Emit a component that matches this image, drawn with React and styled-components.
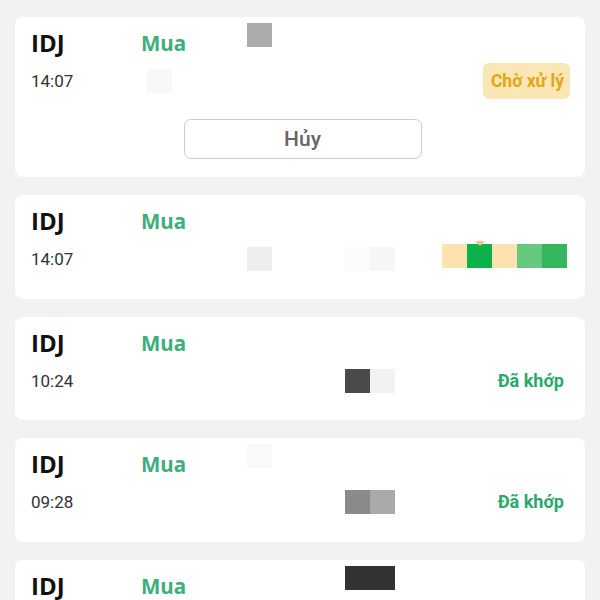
import React from "react";
import styled, { createGlobalStyle } from "styled-components";

const GlobalStyle = createGlobalStyle`
  html, body {
    margin: 0;
    padding: 0;
    background: #f2f2f2;
  }
  body {
    font-family: "Open Sans", "Noto Sans", sans-serif;
  }
`;

const OrderList = styled.div`
  display: flex;
  flex-direction: column;
  gap: 18px;
  padding: 17px 15px 20px;
`;

const Card = styled.div`
  background: #fff;
  border-radius: 8px;
  padding: 10px 21px 27.5px 16px;
`;

const OrderGrid = styled.div`
  display: grid;
  grid-template-columns: 110px 1fr auto;
  grid-template-rows: 32px 24px;
  row-gap: 10px;
  align-items: center;
`;

const Symbol = styled.div`
  font-size: 24px;
  font-weight: 700;
  line-height: 32px;
  color: #111;
`;

const SideCell = styled.div`
  display: flex;
  align-items: center;
  align-self: stretch;
`;

const Side = styled.span`
  font-size: 20.5px;
  font-weight: 700;
  line-height: 32px;
  color: #3daf7a;
  width: 106px;
  flex: none;
`;

const Time = styled.div`
  font-family: Roboto, "Liberation Sans", sans-serif;
  font-size: 17px;
  line-height: 24px;
  color: #333;
`;

const MaskStrip = styled.div`
  display: flex;
  align-self: ${(p) => (p.$top ? "start" : "center")};
  margin-top: ${(p) => (p.$top ? "-4px" : "0")};
`;

const MaskGroup = styled.span`
  display: flex;
`;

const MaskCell = styled.span`
  width: 25px;
  height: 24px;
  background: ${(p) => p.$color};
  flex: none;
`;

const StatusText = styled.div`
  font-family: Roboto, "Liberation Sans", sans-serif;
  font-size: 18px;
  font-weight: 700;
  line-height: 24px;
  color: #2aa96b;
  justify-self: end;
`;

const StatusPill = styled.div`
  font-family: Roboto, "Liberation Sans", sans-serif;
  font-size: 17.5px;
  font-weight: 700;
  color: #e2a614;
  background: #fbe6b6;
  border-radius: 6px;
  padding: 8px 6px 8px 8px;
  margin-right: -6px;
  justify-self: end;
  white-space: nowrap;
`;

const StatusBar = styled.div`
  display: flex;
  justify-self: end;
  margin-top: -6px;
  margin-right: -3px;
  position: relative;
`;

const BarCell = styled.span`
  width: 25px;
  height: 24px;
  background: ${(p) => p.$color};
`;

const Marker = styled.span`
  position: absolute;
  left: 33px;
  top: -3px;
  width: 0;
  height: 0;
  border-left: 5px solid transparent;
  border-right: 5px solid transparent;
  border-top: 5px solid #f6c27a;
`;

const Actions = styled.div`
  display: flex;
  justify-content: center;
  margin: 26px 0 -9.5px 10px;
`;

const CancelButton = styled.button`
  width: 238px;
  height: 40px;
  border: 1.5px solid #cdcdcd;
  border-radius: 7px;
  background: #fff;
  font-family: Roboto, "Liberation Sans", sans-serif;
  font-size: 21px;
  font-weight: 500;
  color: #666;
`;

function Masks({ groups, start, top }) {
  if (!groups || !groups.length) return null;
  let pos = start;
  return (
    <MaskStrip $top={top}>
      {groups.map((g, i) => {
        const gap = g.at - pos;
        pos = g.at + g.colors.length * 25;
        return (
          <MaskGroup key={i} style={{ marginLeft: gap }}>
            {g.colors.map((c, j) => (
              <MaskCell key={j} $color={c} />
            ))}
          </MaskGroup>
        );
      })}
    </MaskStrip>
  );
}

const orders = [
  {
    time: "14:07",
    top: [{ at: 247, colors: ["#ababab"] }],
    bottom: [{ at: 147, colors: ["#f8f8f8"] }],
    status: "pending",
    cancel: true,
  },
  {
    time: "14:07",
    bottom: [
      { at: 247, colors: ["#eeeeee"] },
      { at: 345, colors: ["#fbfbfb", "#f6f6f6"] },
    ],
    status: "bar",
  },
  {
    time: "10:24",
    bottom: [{ at: 345, colors: ["#4a4a4a", "#f2f2f2"] }],
    status: "done",
  },
  {
    time: "09:28",
    top: [{ at: 247, colors: ["#f9f9f9"] }],
    bottom: [{ at: 345, colors: ["#8a8a8a", "#aaaaaa"] }],
    status: "done",
  },
  {
    time: "09:10",
    top: [{ at: 345, colors: ["#333", "#333"] }],
    status: "done",
  },
];

const barColors = ["#fde2ad", "#0cb14b", "#fde2ad", "#64c97e", "#36b55f"];

function Status({ kind }) {
  if (kind === "pending") return <StatusPill>Chờ xử lý</StatusPill>;
  if (kind === "bar")
    return (
      <StatusBar>
        <Marker />
        {barColors.map((c, i) => (
          <BarCell key={i} $color={c} />
        ))}
      </StatusBar>
    );
  return <StatusText>Đã khớp</StatusText>;
}

function OrderCard({ order }) {
  return (
    <Card>
      <OrderGrid>
        <Symbol>IDJ</Symbol>
        <SideCell>
          <Side>Mua</Side>
          <Masks groups={order.top} start={247} top />
        </SideCell>
        <div />
        <Time>{order.time}</Time>
        <SideCell>
          <Masks groups={order.bottom} start={141} />
        </SideCell>
        <Status kind={order.status} />
      </OrderGrid>
      {order.cancel && (
        <Actions>
          <CancelButton>Hủy</CancelButton>
        </Actions>
      )}
    </Card>
  );
}

export default function App() {
  return (
    <>
      <GlobalStyle />
      <OrderList>
        {orders.map((o, i) => (
          <OrderCard key={i} order={o} />
        ))}
      </OrderList>
    </>
  );
}
